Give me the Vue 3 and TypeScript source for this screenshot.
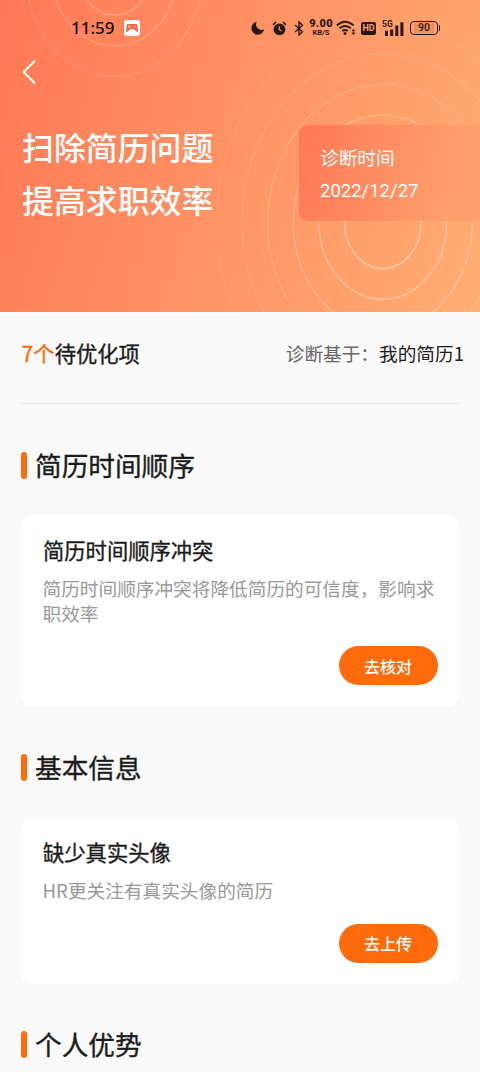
<script setup lang="ts">
interface Advice {
  title: string
  detail: string
  action: string
}
interface Section {
  name: string
  advice?: Advice
}

const rings = [0.38, 0.3, 0.23, 0.16, 0.11, 0.07].map((alpha, k) => ({
  rx: 38.3 + 25.6 * k,
  ry: 46 + 30.7 * k,
  alpha,
}))

const sections: Section[] = [
  {
    name: '简历时间顺序',
    advice: {
      title: '简历时间顺序冲突',
      detail: '简历时间顺序冲突将降低简历的可信度，影响求职效率',
      action: '去核对',
    },
  },
  {
    name: '基本信息',
    advice: { title: '缺少真实头像', detail: 'HR更关注有真实头像的简历', action: '去上传' },
  },
  { name: '个人优势' },
]
</script>

<template>
  <div class="screen">
    <header class="hero">
      <svg class="rings" width="480" height="312" viewBox="0 0 480 312" fill="none" stroke="#fff" stroke-width="1.6">
        <ellipse v-for="r in rings" :key="r.rx" cx="382.8" cy="222.6" :rx="r.rx" :ry="r.ry" :stroke-opacity="r.alpha" />
        <ellipse v-for="r in rings.slice(0, 3)" :key="'l' + r.rx" cx="114.5" cy="-31" :rx="r.rx" :ry="r.ry" :stroke-opacity="r.alpha * 0.55" />
      </svg>

      <div class="status">
        <span class="clock">11:59</span>
        <svg class="game" width="16" height="16" viewBox="0 0 16 16">
          <rect width="16" height="16" rx="3.2" fill="#fff" />
          <path d="M4 4h8q1.200 0 1.500 1.400l.5 5q0 1.600-1 1.600L10.200 9.500H9L8 8.700 7 9.500H5.800L3.200 12q-1.200 0-1.200-1.600l.5-5Q2.800 4 4 4z" fill="#ea6e4e" />
          <path d="M4 6.800h2.400M5.200 5.600V8M9.500 6.800h.9M11.200 6.800h.9" stroke="#ffc9a8" stroke-width=".9" />
        </svg>
        <div class="system">
          <svg class="moon" width="14" height="14" viewBox="0 0 14 14"><path d="M5.700.8a5.600 5.600 0 0 0 7.600 7.500A6.500 6.500 0 1 1 5.700.8z" fill="#2b1711" /></svg>
          <svg class="alarm" width="15" height="15" viewBox="0 0 15 15" fill="none" stroke="#2b1711">
            <circle cx="7.500" cy="8.300" r="5.900" fill="#2b1711" stroke="none" />
            <path d="M1 3.800 4 1M14 3.800 11 1" stroke-width="1.600" />
            <path d="M7.300 5.400v3.100l2 1.600" stroke="#ff9869" stroke-width="1.300" />
          </svg>
          <svg class="bluetooth" width="10" height="15" viewBox="0 0 10 15" fill="none" stroke="#2b1711" stroke-width="1.400"><path d="M1 4l7.500 6.700L5 14V1l3.500 3.300L1 11" /></svg>
          <div class="speed"><b>9.00</b><span>KB/S</span></div>
          <svg class="wifi" width="20" height="16" viewBox="0 0 20 16" fill="none" stroke="#2b1711" stroke-width="1.900">
            <path d="M.9 5.400Q9 -2 17.600 5.400M3.500 8.300Q9 3.600 14.800 8.300M6.200 11.100Q9 8.900 11.900 11.100" />
            <circle cx="9" cy="13.500" r="1.500" fill="#2b1711" stroke="none" />
            <path d="M15.400 11.300l2-2.300 2 2.300zM15.400 12.600l2 2.300 2-2.300z" fill="#2b1711" stroke="none" />
          </svg>
          <span class="hd">HD</span>
          <div class="cell">
            <span>5G</span>
            <svg width="21" height="15" viewBox="0 0 21 15" fill="#2b1711"><path d="M2 9.700h3V15H2zM7.200 8.500h3V15h-3zM12.300 4.500h3V15h-3zM17.400 1.200h3V15h-3z" /></svg>
          </div>
          <div class="battery"><span>90</span></div>
        </div>
      </div>

      <svg class="back" width="14" height="26" viewBox="0 0 14 26" fill="none" stroke="#fff" stroke-width="2.100" stroke-linecap="round" stroke-linejoin="round"><path d="M12.500 2.300 2.400 12.200Q1.700 13 2.400 13.800L12.500 24" /></svg>

      <div class="intro">
        <h1>扫除简历问题<br />提高求职效率</h1>
        <div class="date">
          <span>诊断时间</span>
          <span class="day">2022/12/27</span>
        </div>
      </div>
    </header>

    <main>
      <div class="summary">
        <div class="count"><em>7个</em>待优化项</div>
        <div class="basis">诊断基于：<b>我的简历1</b></div>
      </div>

      <section v-for="s in sections" :key="s.name">
        <h2><span>{{ s.name }}</span></h2>
        <article v-if="s.advice" class="card">
          <h3>{{ s.advice.title }}</h3>
          <p>{{ s.advice.detail }}</p>
          <button type="button">{{ s.advice.action }}</button>
        </article>
      </section>
    </main>
  </div>
</template>

<style>
body {
  margin: 0;
  background: #f9f9f9;
}
</style>

<style scoped>
* {
  box-sizing: border-box;
}
h1,
h2,
h3,
p {
  margin: 0;
}
.screen {
  width: 480px;
  height: 1072px;
  overflow: hidden;
  background: #f9f9f9;
  color: #1b1b1b;
  font-family: 'Noto Sans CJK SC', sans-serif;
}
.hero {
  position: relative;
  height: 312px;
  background: linear-gradient(108deg, #ff7855 0%, #ff9364 50%, #ffad72 100%);
  color: #fff;
}
.rings {
  position: absolute;
  inset: 0;
}
.status {
  position: relative;
  display: flex;
  align-items: center;
  height: 56px;
  padding-left: 71px;
  color: #150b08;
}
.clock {
  width: 53px;
  font: 500 17px/20px 'Noto Sans', sans-serif;
  white-space: nowrap;
}
.game {
  flex: none;
}
.system {
  display: flex;
  align-items: center;
  margin-left: 111px;
  color: #2b1711;
}
.system > * {
  flex: none;
}
.alarm {
  margin-left: 7px;
}
.bluetooth {
  margin-left: 7px;
}
.speed {
  display: flex;
  flex-direction: column;
  align-items: center;
  width: 24px;
  margin-left: 5px;
  font: 700 11px/10px Roboto, sans-serif;
}
.speed b {
  letter-spacing: 0.3px;
}
.speed span {
  font-size: 7.500px;
  line-height: 8px;
}
.wifi {
  margin-left: 3px;
}
.hd {
  width: 15px;
  height: 13px;
  margin-left: 5px;
  border-radius: 2px;
  background: #2b1711;
  color: #ffa06c;
  font: 700 9px/13px Roboto, sans-serif;
  text-align: center;
}
.cell {
  position: relative;
  width: 21px;
  height: 15px;
  margin-left: 7px;
}
.cell span {
  position: absolute;
  left: -1px;
  top: -1px;
  font: 700 8.500px/9px Roboto, sans-serif;
}
.cell svg {
  display: block;
}
.battery {
  position: relative;
  width: 28px;
  height: 14px;
  margin-left: 6px;
  border: 1.300px solid #2b1711;
  border-radius: 4px;
  font: 500 10.500px/12px Roboto, sans-serif;
  text-align: center;
}
.battery span {
  display: block;
  margin: 1px 3px;
  line-height: 10px;
  background: rgba(190, 105, 65, 0.3);
}
.battery::after {
  content: '';
  position: absolute;
  right: -3px;
  top: 3px;
  width: 1.500px;
  height: 6px;
  border-radius: 1px;
  background: #2b1711;
}
.back {
  position: relative;
  display: block;
  margin: 3px 0 0 22px;
}
.intro {
  position: relative;
  display: flex;
  justify-content: space-between;
  align-items: flex-start;
  margin-top: 35px;
  padding-left: 22px;
}
h1 {
  font-size: 31.900px;
  font-weight: 500;
  line-height: 53px;
}
.date {
  display: flex;
  flex-direction: column;
  width: 181px;
  height: 96px;
  margin-top: 5px;
  padding: 15px 0 0 21px;
  border-radius: 9px 0 0 9px;
  background: linear-gradient(104deg, #ff7855, #ffa06c 85%);
  font-size: 18.670px;
  line-height: 33px;
}
.day {
  padding-top: 2px;
  font-family: Roboto, sans-serif;
  font-size: 18.500px;
}
main {
  padding: 0 21px;
}
.summary {
  display: flex;
  justify-content: space-between;
  align-items: center;
  height: 92px;
  padding-bottom: 10px;
  border-bottom: 1px solid #e3e3e3;
  white-space: nowrap;
}
.count,
h2,
h3 {
  font-weight: 400;
  -webkit-text-stroke: 0.35px currentColor;
}
.count {
  padding-left: 0.5px;
  font-size: 21.300px;
}
.count em {
  color: #ff6b0a;
  font-style: normal;
}
.basis {
  margin-right: -5px;
  color: #666;
  font-size: 18.670px;
}
.basis b {
  color: #1b1b1b;
  font-weight: 400;
}
section {
  padding-top: 41px;
}
h2 {
  display: flex;
  align-items: center;
  height: 40px;
  font-size: 26.670px;
}
h2 span {
  padding-bottom: 2px;
}
h2::before {
  content: '';
  width: 6px;
  height: 27px;
  margin-right: 8px;
  border-radius: 3px;
  background: #ff6b0a;
}
.card {
  display: flex;
  flex-direction: column;
  margin-top: 30px;
  padding: 19px 21.500px 21px;
  border-radius: 11px;
  background: #fff;
}
h3 {
  padding-left: 0.5px;
  font-size: 21.300px;
  line-height: 32px;
}
p {
  margin-top: 9px;
  color: #999;
  font-size: 18.670px;
  line-height: 25px;
}
button {
  align-self: flex-end;
  width: 99px;
  height: 39px;
  margin-top: 21.300px;
  padding: 0;
  border: 0;
  border-radius: 20px;
  background: #ff6b0a;
  color: #fff;
  font: 500 16px/38px 'Noto Sans CJK SC', sans-serif;
}
</style>
